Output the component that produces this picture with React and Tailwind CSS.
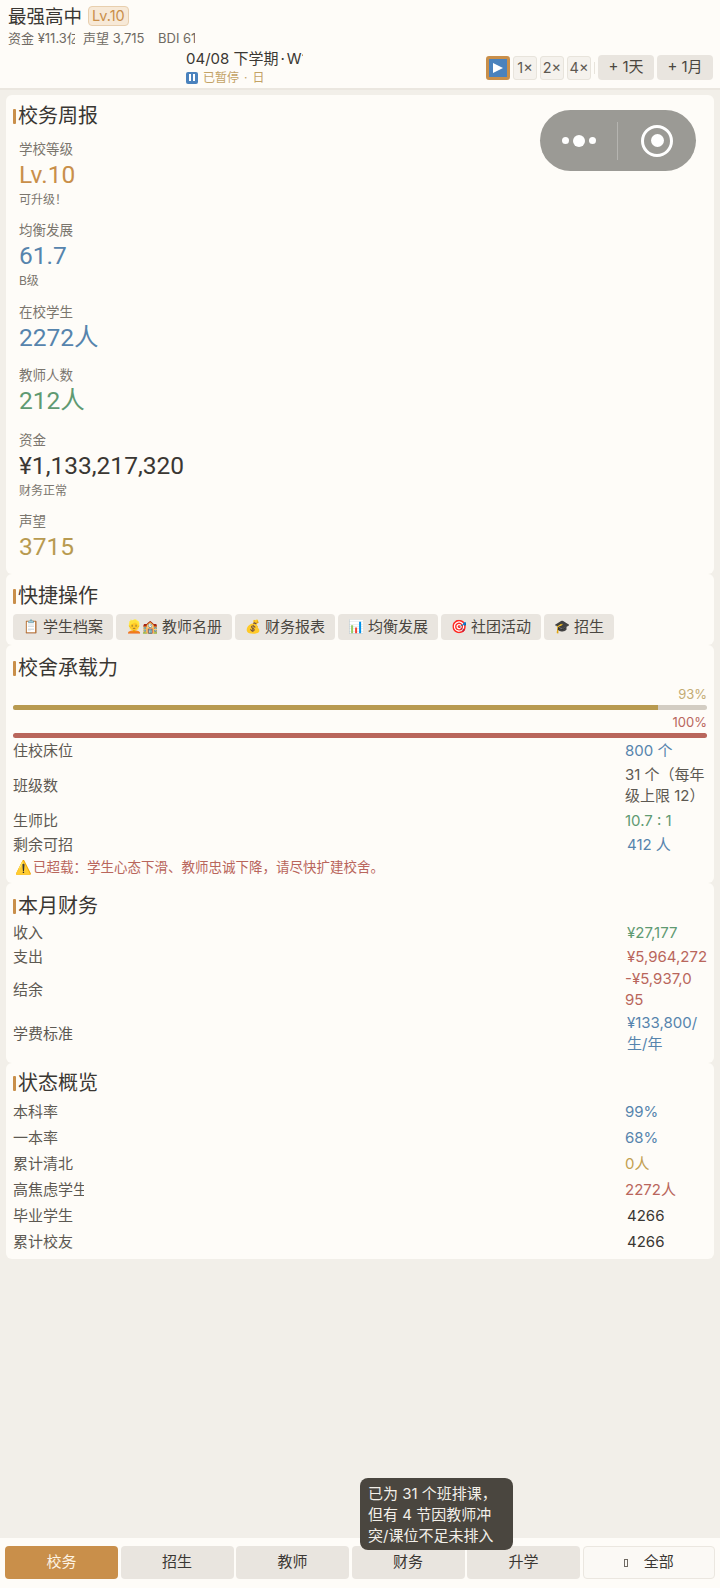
import React from "react";

const font = "font-['Inter','Noto_Sans_CJK_SC',sans-serif]";

const Heading = ({ children, className = "" }) => (
	<div className={`flex items-center gap-[2px] text-[20px] leading-[26px] text-[#3a3733] ${className}`}>
		<span className="w-[3px] h-[15px] bg-[#c98f4a] rounded-[1px]" />
		<span>{children}</span>
	</div>
);

const Stat = ({ label, value, note, color, className = "" }) => (
	<div className={`px-[6px] ${className}`}>
		<div className="text-[13.5px] leading-[18px] text-[#7b766e]">{label}</div>
		<div className={`font-['Roboto','Noto_Sans_CJK_SC',sans-serif] text-[24.5px] leading-[33px] ${color}`}>{value}</div>
		{note && <div className="text-[12px] leading-[18px] text-[#7b766e]">{note}</div>}
	</div>
);

const Row = ({ label, value, color, className = "" }) => (
	<div className={`flex items-center text-[15px] leading-[21px] ${className}`}>
		<div className="w-[71px] mr-[541px] shrink-0 overflow-hidden whitespace-nowrap text-[#5d5952]">{label}</div>
		<div className={`w-[82px] shrink-0 ${color}`}>{value}</div>
	</div>
);

const quick = [
	["📋", "学生档案", "w-[15px]"],
	["👱🏫", "教师名册", "w-[31px]"],
	["💰", "财务报表", "w-[15px]"],
	["📊", "均衡发展", "w-[15px]"],
	["🎯", "社团活动", "w-[15px]"],
	["🎓", "招生", "w-[15px]"],
];

const tabs = ["校务", "招生", "教师", "财务", "升学"];

const App = () => {
	return (
		<div className={`relative w-[720px] h-[1588px] bg-[#f2efe9] flex flex-col overflow-hidden ${font}`}>
			<header className="h-[90px] shrink-0 bg-[#fefcf8] border-b-2 border-[#ebe7e0] pl-[8px] pr-[7px]">
				<div className="flex items-center gap-[6px] pt-[5px]">
					<span className="text-[18.5px] leading-[22px] text-[#3a3733]">最强高中</span>
					<span className="text-[14.5px] leading-[18px] px-[3px] rounded-[4px] bg-[#f7e9d7] border border-[#e8cfae] text-[#c98f4a]">Lv.10</span>
				</div>
				<div className="flex text-[13px] leading-[18px] text-[#6f6a63] mt-[2px]">
					<span className="w-[67px] mr-[8px] overflow-hidden whitespace-nowrap">资金 ¥11.3亿</span>
					<span className="w-[62px] mr-[13px] whitespace-nowrap">声望 3,715</span>
					<span className="w-[37px] overflow-hidden whitespace-nowrap">BDI 61</span>
				</div>
				<div className="flex justify-between mt-[2px]">
					<div className="w-[117px] ml-[178px]">
						<div className="text-[15px] leading-[20px] text-[#3a3733] overflow-hidden whitespace-nowrap">
							04/08 下学期<span className="mx-[2px]">·</span>W1
						</div>
						<div className="flex items-center text-[12px] leading-[17px] text-[#c3a265]">
							<span className="w-[12px] h-[12px] mr-[5px] bg-[#4a82bd] rounded-[2px] flex items-center justify-center gap-[2px]">
								<i className="w-[2px] h-[7px] bg-white" />
								<i className="w-[2px] h-[7px] bg-white" />
							</span>
							<span>已暂停</span>
							<span className="mx-[5px]">·</span>
							<span>日</span>
						</div>
					</div>
					<div className="flex items-center gap-[3px] h-[25px] mt-[6px]">
						<span className="w-[24px] h-[24px] rounded-[3px] bg-[#4a82bd] border-[3px] border-[#c98f4a] flex items-center justify-center">
							<svg width="12" height="12" viewBox="0 0 12 12"><path d="M1 1 L11 6 L1 11 Z" fill="#fff" /></svg>
						</span>
						{["1×", "2×", "4×"].map((s) => (
							<span key={s} className="w-[24px] h-[24px] rounded-[3px] bg-[#f5f2ed] border border-[#e8e4dc] text-[14.5px] text-[#5d5952] flex items-center justify-center">{s}</span>
						))}
						<span className="w-[1px] h-[12px] bg-[#e8e4dc]" />
						{["+ 1天", "+ 1月"].map((s) => (
							<span key={s} className="w-[56px] h-[25px] rounded-[4px] bg-[#e9e5df] text-[15px] text-[#4a4640] flex items-center justify-center">{s}</span>
						))}
					</div>
				</div>
			</header>

			<main className="flex-1 flex flex-col px-[6px] pt-[5px]">
				<section className="bg-[#fefcf8] rounded-[6px] h-[479px] px-[7px] pt-[8px] relative">
					<Heading>校务周报</Heading>
					<Stat label="学校等级" value="Lv.10" note="可升级！" color="text-[#c98f4a]" className="mt-[11px]" />
					<Stat label="均衡发展" value="61.7" note="B级" color="text-[#5684ad]" className="mt-[12px]" />
					<Stat label="在校学生" value="2272人" color="text-[#5684ad]" className="mt-[13px]" />
					<Stat label="教师人数" value="212人" color="text-[#5f9a72]" className="mt-[12px]" />
					<Stat label="资金" value="¥1,133,217,320" note="财务正常" color="text-[#3a3733]" className="mt-[14px]" />
					<Stat label="声望" value="3715" color="text-[#b89a50]" className="mt-[12px]" />
					<div className="absolute right-[18px] top-[15px] w-[156px] h-[61px] rounded-full bg-[#9b9a95] flex items-center">
						<div className="w-[77px] flex items-center justify-center gap-[4px]">
							<i className="w-[7px] h-[7px] rounded-full bg-white" />
							<i className="w-[12px] h-[12px] rounded-full bg-white" />
							<i className="w-[7px] h-[7px] rounded-full bg-white" />
						</div>
						<div className="w-[1px] h-[38px] bg-[#b5b4b0]" />
						<div className="flex-1 flex items-center justify-center">
							<div className="w-[32px] h-[32px] rounded-full border-[3px] border-white flex items-center justify-center">
								<i className="w-[13px] h-[13px] rounded-full bg-white" />
							</div>
						</div>
					</div>
				</section>

				<section className="bg-[#fefcf8] rounded-[6px] h-[71px] px-[7px] pt-[9px]">
					<Heading>快捷操作</Heading>
					<div className="flex gap-[3px] mt-[5px]">
						{quick.map(([icon, name, width]) => (
							<span key={name} className="h-[26px] px-[10px] rounded-[4px] bg-[#e9e5df] flex items-center gap-[5px] text-[15px] text-[#4a4640] whitespace-nowrap">
								<span className={`text-[13px] ${width} overflow-hidden`}>{icon}</span>
								{name}
							</span>
						))}
					</div>
				</section>

				<section className="bg-[#fefcf8] rounded-[6px] h-[238px] px-[7px] pt-[10px]">
					<Heading>校舍承载力</Heading>
					<div className="text-right text-[13px] leading-[16px] text-[#c3ab72] mt-[5px]">93%</div>
					<div className="h-[5px] rounded-full bg-[#d3cdc3] overflow-hidden mt-[3px]">
						<div className="h-full bg-[#b89a50]" style={{ width: "93%" }} />
					</div>
					<div className="text-right text-[13px] leading-[16px] text-[#b9665c] mt-[4px]">100%</div>
					<div className="h-[5px] rounded-full bg-[#b9665c] mt-[3px]" />
					<Row label="住校床位" value="800 个" color="text-[#5684ad]" className="h-[24px]" />
					<Row label="班级数" value="31 个（每年级上限 12）" color="text-[#5d5952]" className="h-[46px]" />
					<Row label="生师比" value="10.7 : 1" color="text-[#5f9a72]" className="h-[24px]" />
					<Row label="剩余可招" value="412 人" color="text-[#5684ad] pl-[2px]" className="h-[24px]" />
					<div className="flex gap-[3px] text-[13.5px] leading-[20px] text-[#b9665c] mt-[1px] pl-[2px]">
						<span className="w-[15px]">⚠️</span>
						<span>已超载：学生心态下滑、教师忠诚下降，请尽快扩建校舍。</span>
					</div>
				</section>

				<section className="bg-[#fefcf8] rounded-[6px] h-[180px] px-[7px] pt-[10px]">
					<Heading>本月财务</Heading>
					<Row label="收入" value="¥27,177" color="text-[#5f9a72] pl-[2px]" className="h-[24px] mt-[1px]" />
					<Row label="支出" value="¥5,964,272" color="text-[#b9665c] pl-[2px] whitespace-nowrap" className="h-[24px]" />
					<Row label="结余" value={<>-¥5,937,0<br />95</>} color="text-[#b9665c]" className="h-[42px]" />
					<Row label="学费标准" value="¥133,800/生/年" color="text-[#5684ad] pl-[2px]" className="h-[46px]" />
				</section>

				<section className="bg-[#fefcf8] rounded-[6px] h-[196px] px-[7px] pt-[7px]">
					<Heading>状态概览</Heading>
					<Row label="本科率" value="99%" color="text-[#5684ad]" className="h-[26px] mt-[2px]" />
					<Row label="一本率" value="68%" color="text-[#5684ad]" className="h-[26px]" />
					<Row label="累计清北" value="0人" color="text-[#c3a050]" className="h-[26px]" />
					<Row label="高焦虑学生" value="2272人" color="text-[#b9665c]" className="h-[26px]" />
					<Row label="毕业学生" value="4266" color="text-[#3a3733] pl-[2px]" className="h-[26px]" />
					<Row label="累计校友" value="4266" color="text-[#3a3733] pl-[2px]" className="h-[26px]" />
				</section>
			</main>

			<nav className="h-[50px] shrink-0 bg-[#fefcf8] flex gap-[2.5px] px-[5px] pt-[8px]">
				{tabs.map((t, i) => (
					<span key={t} className={`w-[113px] h-[33px] rounded-[4px] flex items-center justify-center text-[15px] ${i === 0 ? "bg-[#c98f4a] text-[#fdf3e3]" : "bg-[#e9e5df] text-[#3a3733]"}`}>{t}</span>
				))}
				<span className="flex-1 h-[33px] rounded-[4px] bg-[#fbf9f5] border border-[#ebe7e0] flex items-center justify-center gap-[16px] text-[15px] text-[#3a3733]">
					<span className="w-[4px] h-[8px] border border-[#6f6a63]" />
					全部
				</span>
			</nav>

			<div className="absolute left-[360px] top-[1478px] w-[153px] h-[72px] rounded-[8px] bg-[#4a463f] px-[8px] py-[5px] text-[15px] leading-[21px] text-[#f2efe9]">
				已为 31 个班排课，但有 4 节因教师冲突/课位不足未排入
			</div>
		</div>
	);
};

export default App;
